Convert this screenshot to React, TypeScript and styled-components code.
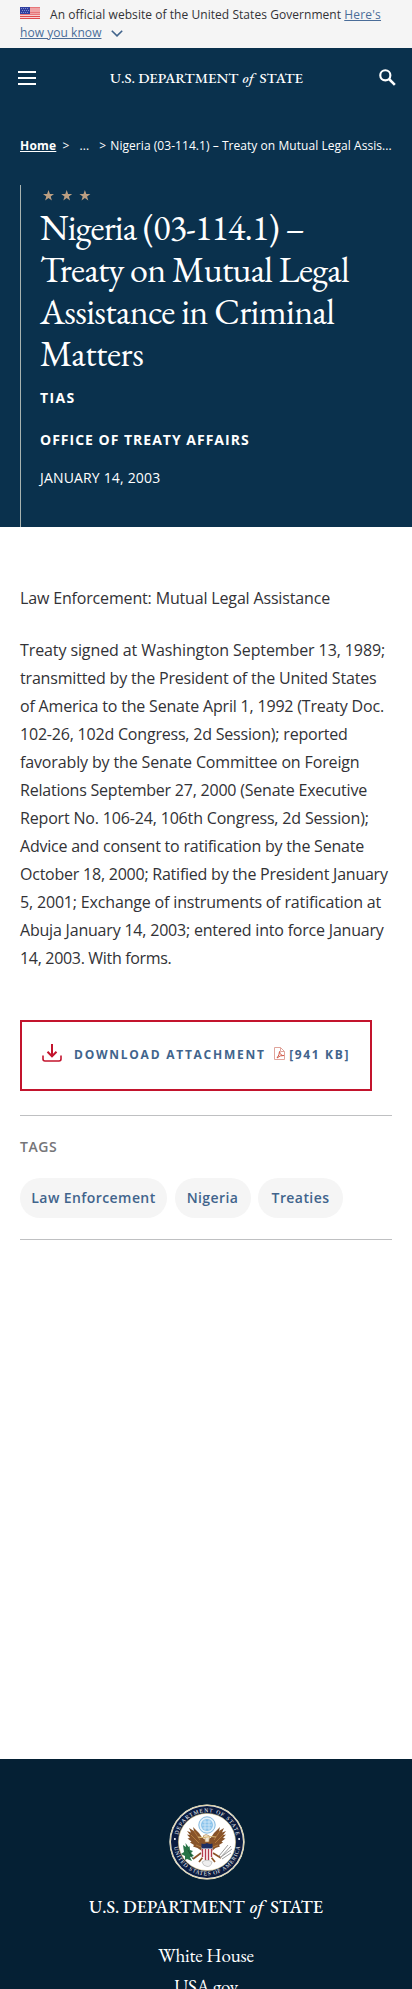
import React from "react";
import styled, { createGlobalStyle } from "styled-components";

const sans = `"Open Sans", "Noto Sans", sans-serif`;
const serif = `"EB Garamond", "Liberation Serif", serif`;

const GlobalStyle = createGlobalStyle`
  *, *::before, *::after { box-sizing: border-box; }
  body { margin: 0; background: #fff; font-family: ${sans}; color: #323236; }
  h1, p, ul { margin: 0; padding: 0; }
  ul { list-style: none; }
`;

const Page = styled.div`
  display: flex;
  flex-direction: column;
  width: 100%;
  height: 1989px;
  overflow: hidden;
`;

const GovBanner = styled.div`
  flex: none;
  height: 48px;
  padding: 5.5px 20px 0;
  background: #f5f5f5;
  font-size: 12px;
  line-height: 18px;
  letter-spacing: 0.05px;
  white-space: nowrap;
  color: #323236;
`;

const Flag = styled.svg`
  width: 20px;
  height: 12px;
  margin-right: 10px;
  vertical-align: 0;
`;

const BannerLink = styled.a`
  color: #4a6d99;
  text-decoration: underline;
`;

const LinkStart = styled.span`
  letter-spacing: 0.2px;
`;

const Chevron = styled.svg`
  width: 12px;
  height: 7px;
  margin-left: 10px;
  vertical-align: 0;
`;

const TopBar = styled.header`
  display: flex;
  flex: none;
  align-items: center;
  justify-content: space-between;
  height: 60px;
  padding: 0 16px 0 18px;
  background: #0a314d;
`;

const Burger = styled.svg`
  width: 18px;
  height: 14px;
  margin-right: -2px;
`;

const SearchIcon = styled.svg`
  width: 17.5px;
  height: 17.5px;
`;

const WordmarkSvg = styled.svg<{ $w: number; $h: number }>`
  display: block;
  flex: none;
  width: ${(p) => p.$w}px;
  height: ${(p) => p.$h}px;
  overflow: visible;
  font-family: ${serif};
  font-weight: 500;
  fill: #fff;
`;

const Hero = styled.section`
  display: flex;
  flex: none;
  flex-direction: column;
  height: 419px;
  padding: 0 20px;
  background: #0a314d;
  color: #fff;
`;

const Crumbs = styled.nav`
  display: flex;
  height: 77px;
  padding-top: 28.5px;
  font-size: 12px;
  line-height: 18px;
  white-space: nowrap;
`;

const CrumbHome = styled.a`
  font-weight: 700;
  text-decoration: underline;
  letter-spacing: 0.2px;
`;

const CrumbPart = styled.span<{ $gap: number }>`
  margin-left: ${(p) => p.$gap}px;
  letter-spacing: 0.05px;
`;

const HeroBody = styled.div`
  flex: 1;
  padding: 5px 0 0 19px;
  border-left: 1px solid #a9b3b0;
`;

const Stars = styled.svg`
  display: block;
  width: 50px;
  height: 11px;
  margin-left: 3px;
`;

const Title = styled.h1`
  margin-top: 6px;
  font-family: ${serif};
  font-weight: 400;
  font-size: 36px;
  line-height: 42px;
`;

const TextLine = styled.span<{ $track: number }>`
  display: block;
  white-space: nowrap;
  letter-spacing: ${(p) => p.$track}px;
`;

const Meta = styled.p<{ $top: number; $bold?: boolean; $track: number }>`
  margin-top: ${(p) => p.$top}px;
  font-size: 14px;
  line-height: 20px;
  font-weight: ${(p) => (p.$bold ? 700 : 400)};
  letter-spacing: ${(p) => p.$track}px;
`;

const Article = styled.main`
  display: flex;
  flex: none;
  flex-direction: column;
  height: 1232px;
  padding: 57px 20px 0;
`;

const Paragraph = styled.p`
  margin-bottom: 24px;
  font-size: 16px;
  line-height: 28px;
`;

const Download = styled.a`
  display: flex;
  align-items: center;
  width: 352px;
  height: 71px;
  margin-top: 24px;
  padding: 0 0 2px 20px;
  border: 2px solid #c3142d;
  color: #41648c;
  font-size: 12px;
  font-weight: 700;
  letter-spacing: 1.75px;
  white-space: nowrap;
`;

const FileSize = styled.span`
  letter-spacing: 1.65px;
`;

const DownloadIcon = styled.svg`
  width: 20px;
  height: 18px;
  margin: -4px 12px 0 0;
`;

const PdfIcon = styled.svg`
  width: 11px;
  height: 13px;
  margin: -2px 4px 0 8.5px;
`;

const TagSection = styled.section`
  height: 125px;
  margin-top: 24px;
  padding-top: 21px;
  border: solid #bfc0c2;
  border-width: 1px 0;
`;

const TagHeading = styled.p`
  font-size: 14px;
  font-weight: 600;
  line-height: 20px;
  letter-spacing: 0.6px;
  color: #757578;
`;

const TagList = styled.ul`
  display: flex;
  gap: 7.5px;
  margin-top: 21px;
`;

const Tag = styled.li<{ $w: number }>`
  width: ${(p) => p.$w}px;
  height: 40px;
  border-radius: 20px;
  background: #f5f5f5;
  color: #41648c;
  font-size: 14px;
  font-weight: 600;
  line-height: 40px;
  text-align: center;
  letter-spacing: 0.42px;
  white-space: nowrap;
`;

const Footer = styled.footer`
  display: flex;
  flex-direction: column;
  align-items: center;
  flex: none;
  padding-top: 45px;
  background: #052034;
  color: #fff;
`;

const Seal = styled.svg`
  flex: none;
  width: 76px;
  height: 76px;
  margin: 0 0 12px 2px;
`;

const FooterLinks = styled.ul`
  margin-top: 20px;
  text-align: center;
`;

const FooterLink = styled.li<{ $track: number }>`
  font-family: ${serif};
  font-size: 19px;
  line-height: 31px;
  letter-spacing: ${(p) => p.$track}px;
`;

const Wordmark = ({ width, height, size, baseline }: { width: number; height: number; size: number; baseline: number }) => {
  const unit = width / 233;
  return (
    <WordmarkSvg $w={width} $h={height} fontSize={size} aria-label="U.S. Department of State">
      <text x={0} y={baseline} textLength={155 * unit} lengthAdjust="spacingAndGlyphs">U.S. DEPARTMENT</text>
      <text x={160 * unit} y={baseline} fontStyle="italic">of</text>
      <text x={180.5 * unit} y={baseline} textLength={52.5 * unit} lengthAdjust="spacingAndGlyphs">STATE</text>
    </WordmarkSvg>
  );
};

const starPath = "M5.5 0 6.9 3.9 11 4 7.7 6.5 8.9 10.4 5.5 8.1 2.1 10.4 3.3 6.5 0 4 4.1 3.9Z";

const DepartmentSeal = () => (
  <Seal viewBox="0 0 76 76" aria-label="Department seal">
    <defs>
      <path id="arcTop" d="M8.2 38a29.8 29.8 0 0 1 59.6 0" />
      <path id="arcBottom" d="M4.7 38a33.3 33.3 0 0 0 66.6 0" />
    </defs>
    <circle cx="38" cy="38" r="37.6" fill="#fff" />
    <circle cx="38" cy="38" r="36.9" fill="none" stroke="#c9b877" strokeWidth=".7" />
    <circle cx="38" cy="38" r="36" fill="#0b1c40" />
    <circle cx="38" cy="38" r="28.6" fill="#fff" stroke="#d6c585" strokeWidth=".6" />
    <g fill="#fff" fontFamily="Liberation Serif, serif" fontSize="5.6">
      <text><textPath href="#arcTop" startOffset="7" textLength="80">DEPARTMENT OF STATE</textPath></text>
      <text><textPath href="#arcBottom" startOffset="5" textLength="95">UNITED STATES OF AMERICA</textPath></text>
    </g>
    <circle cx="5.9" cy="35" r="1" fill="#fff" />
    <circle cx="70.1" cy="35" r="1" fill="#fff" />
    <circle cx="38" cy="21" r="8.2" fill="#e3f1fa" stroke="#82b8df" strokeWidth="1" />
    <circle cx="38" cy="21" r="6" fill="#8cc4ec" />
    <path d="M34 18h8M33 21h10M34 24h8M36 16v10M40 16v10" stroke="#d7ebf8" strokeWidth=".8" />
    <path d="M36.5 36 33 33.5 30 29l-6-6 1 4-5-3 2 4.500-4-1.500 3 4-3-.5 3 3.600-2.500.4 4 3-1.500 1 4 2.500-1 1.500 4.500 1.500L33 47h10l3.500-3 4.500-1.500-1-1.500 4-2.500-1.500-1 4-3-2.500-.4 3-3.600-3 .5 3-4-4 1.500 2-4.500-5 3 1-4-6 6-3 4.500-3.500 2.500Z" fill="#87532a" />
    <path d="M25 27l6 9M22 31l8 8M51 27l-6 9M54 31l-8 8M27 41l5 2M49 41l-5 2" stroke="#bd8140" strokeWidth=".8" />
    <path d="M36 38v-4l-2-2 3-1.500 3.500 1.500-.5 6Z" fill="#f1e7d3" stroke="#a8763c" strokeWidth=".6" />
    <path d="M29 33q5 1 9 0t9 0" stroke="#d9b777" strokeWidth="1.200" fill="none" />
    <path d="M32 49l-8 6M44 49l8 5M34 53l-4 5M42 53l4 5" stroke="#8c5528" strokeWidth="1.700" />
    <path d="M32.500 43h11v9q-1 3-5.500 4.500-4.500-1.500-5.500-4.500Z" fill="#fff" />
    <path d="M33.500 45v8M36.500 45v11M39.500 45v11M42.500 45v8" stroke="#b33b4d" strokeWidth="1.400" />
    <path d="M32.500 39.500q2.500 1 5.500-.5 3 1.500 5.500.5v5h-11Z" fill="#1e2f62" />
    <path d="M33 58q5-3.500 10 0-1 5-5 4.500T33 58Z" fill="#eee" stroke="#aaa" strokeWidth=".6" />
    <path d="M14 41l3 2-.5-4 3 4 1-1 .5 4 3 1-2 2 3 3-4 1 2 4-5-2-2 1v-4l-4-2 3-2Z" fill="#277346" />
    <path d="M19 46l5 9" stroke="#174d30" strokeWidth=".8" />
    <path d="M51 54l11-12M52 53l11-8M50 52l9-11M53 55l9-6" stroke="#9b9b9b" strokeWidth="1" />
  </Seal>
);

const titleLines: [string, number][] = [
  ["Nigeria (03-114.1) –", -0.84],
  ["Treaty on Mutual Legal", -0.73],
  ["Assistance in Criminal", -0.66],
  ["Matters", -0.43],
];

const bodyLines: [string, number][] = [
  ["Treaty signed at Washington September 13, 1989;", -0.1],
  ["transmitted by the President of the United States", -0.18],
  ["of America to the Senate April 1, 1992 (Treaty Doc.", -0.19],
  ["102-26, 102d Congress, 2d Session); reported", -0.2],
  ["favorably by the Senate Committee on Foreign", -0.14],
  ["Relations September 27, 2000 (Senate Executive", -0.22],
  ["Report No. 106-24, 106th Congress, 2d Session);", -0.17],
  ["Advice and consent to ratification by the Senate", -0.22],
  ["October 18, 2000; Ratified by the President January", -0.23],
  ["5, 2001; Exchange of instruments of ratification at", -0.17],
  ["Abuja January 14, 2003; entered into force January", -0.2],
  ["14, 2003. With forms.", -0.32],
];

export default function App() {
  return (
    <Page>
      <GlobalStyle />
      <GovBanner>
        <Flag viewBox="0 0 20 12">
          <rect width="20" height="12" fill="#fff" />
          <path d="M0 .9h20M0 3h20M0 5.100h20M0 7.200h20M0 9.300h20M0 11.400h20" stroke="#df4a4e" strokeWidth="1.200" />
          <rect width="10" height="7" fill="#303f9f" />
          <path d="M1 1.500h8M2 3.500h7M1 5.500h8" stroke="#96a0da" strokeWidth=".8" strokeDasharray="1 1" />
        </Flag>
        An official website of the United States Government{" "}
        <BannerLink>
          <LinkStart>Here's</LinkStart>
          <br />
          how you know
        </BannerLink>
        <Chevron viewBox="0 0 12 7"><path d="M.8.800 6 5.900 11.200.8" fill="none" stroke="#41648c" strokeWidth="1.600" /></Chevron>
      </GovBanner>

      <TopBar>
        <Burger viewBox="0 0 18 14"><path d="M0 1h18M0 7h18M0 13h18" stroke="#fff" strokeWidth="2" /></Burger>
        <Wordmark width={193} height={20} size={15} baseline={14.5} />
        <SearchIcon viewBox="0 0 18 18">
          <circle cx="6.500" cy="6.500" r="5.200" fill="none" stroke="#fff" strokeWidth="2.200" />
          <path d="M10.300 10.300 16.300 16.300" stroke="#fff" strokeWidth="2.600" />
        </SearchIcon>
      </TopBar>

      <Hero>
        <Crumbs>
          <CrumbHome>Home</CrumbHome>
          <CrumbPart $gap={6.3}>&gt;</CrumbPart>
          <CrumbPart $gap={10}>...</CrumbPart>
          <CrumbPart $gap={10}>&gt;</CrumbPart>
          <CrumbPart $gap={4.3}>Nigeria (03-114.1) – Treaty on Mutual Legal Assis...</CrumbPart>
        </Crumbs>
        <HeroBody>
          <Stars viewBox="0 0 50 11" fill="#bc9f82">
            <path d={starPath} />
            <path d={starPath} transform="translate(18.200)" />
            <path d={starPath} transform="translate(36.400)" />
          </Stars>
          <Title>
            {titleLines.map(([text, track]) => (
              <TextLine key={text} $track={track}>{text}</TextLine>
            ))}
          </Title>
          <Meta $top={12.5} $bold $track={1.4}>TIAS</Meta>
          <Meta $top={22} $bold $track={1}>OFFICE OF TREATY AFFAIRS</Meta>
          <Meta $top={18} $track={0.17}>JANUARY 14, 2003</Meta>
        </HeroBody>
      </Hero>

      <Article>
        <Paragraph>
          <TextLine $track={-0.16}>Law Enforcement: Mutual Legal Assistance</TextLine>
        </Paragraph>
        <Paragraph>
          {bodyLines.map(([text, track]) => (
            <TextLine key={text} $track={track}>{text}</TextLine>
          ))}
        </Paragraph>
        <Download>
          <DownloadIcon viewBox="0 0 20 18" fill="none" stroke="#c3142d" strokeWidth="2">
            <path d="M10 0v12M5.500 7.800 10 12.300l4.500-4.500" />
            <path d="M1 11.500v3.500q0 2 2 2h14q2 0 2-2v-3.500" strokeWidth="1.600" />
          </DownloadIcon>
          DOWNLOAD ATTACHMENT
          <PdfIcon viewBox="0 0 11 13">
            <path d="M.5.500h6l4 4v8H.5Z" fill="#fff" stroke="#e0a49b" />
            <path d="M6.500.5v4h4" fill="none" stroke="#e0a49b" />
            <path d="M3 11q2.500-3 2.500-6.500Q6.500 9 10 8.500 6 8 3 11Z" fill="none" stroke="#d25a48" />
          </PdfIcon>
          <FileSize>[941 KB]</FileSize>
        </Download>
        <TagSection>
          <TagHeading>TAGS</TagHeading>
          <TagList>
            <Tag $w={147}>Law Enforcement</Tag>
            <Tag $w={76}>Nigeria</Tag>
            <Tag $w={85}>Treaties</Tag>
          </TagList>
        </TagSection>
      </Article>

      <Footer>
        <DepartmentSeal />
        <Wordmark width={234} height={28} size={18.5} baseline={21} />
        <FooterLinks>
          <FooterLink $track={-0.15}>White House</FooterLink>
          <FooterLink $track={-0.4}>USA.gov</FooterLink>
        </FooterLinks>
      </Footer>
    </Page>
  );
}
